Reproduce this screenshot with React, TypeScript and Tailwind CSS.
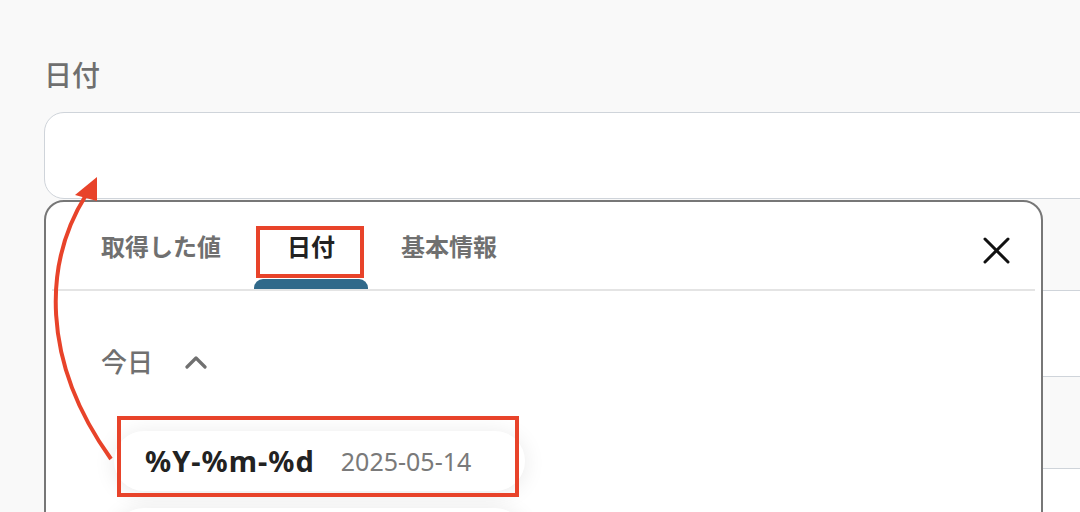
import { useState } from 'react'

type Tab = { key: string; label: string }

const tabs: Tab[] = [
  { key: 'values', label: '取得した値' },
  { key: 'date', label: '日付' },
  { key: 'basic', label: '基本情報' },
]

const formats = [{ fmt: '%Y-%m-%d', sample: '2025-05-14' }]

function Field({ label }: { label: string }) {
  return (
    <div className="flex flex-col">
      <div className="h-[53px] text-[28px] leading-[32px] font-medium text-[#6f6f6f]">{label}</div>
      <div className="h-[87px] rounded-[20px] border border-[#cfd4da] bg-white" />
    </div>
  )
}

export default function App() {
  const [active, setActive] = useState('date')
  const [open, setOpen] = useState(true)

  return (
    <div
      className="relative w-[1080px] h-[512px] overflow-hidden bg-[#f9f9f9]"
      style={{ fontFamily: '"Noto Sans", "Noto Sans CJK JP", sans-serif' }}
    >
      {/* form behind the picker */}
      <div className="w-[1300px] pl-[44px] pt-[59px] flex flex-col gap-[38px]">
        <Field label="日付" />
        <Field label="" />
        <Field label="" />
      </div>

      {open && (
        <div className="absolute left-[44px] top-[200px] w-[999px] h-[400px] rounded-[20px] border-2 border-[#777777] bg-white">
          {/* tabs */}
          <div className="flex h-[87px] pl-[22px]">
            {tabs.map((t) => (
              <button
                key={t.key}
                onClick={() => setActive(t.key)}
                className="flex flex-col items-center px-[33px]"
              >
                <span
                  className={`pt-[29px] text-[24px] leading-[32px] font-bold ${
                    active === t.key ? 'text-[#222222]' : 'text-[#707070]'
                  }`}
                >
                  {t.label}
                </span>
                <span
                  className={`mt-auto h-[10px] -mx-[33px] self-stretch rounded-t-[9px] ${
                    active === t.key ? 'bg-[#30698a]' : 'bg-transparent'
                  }`}
                />
              </button>
            ))}
            <button onClick={() => setOpen(false)} className="ml-auto mr-[31px] mt-[35px] self-start">
              <svg width="27" height="27" viewBox="0 0 27 27" fill="none" stroke="#111111" strokeWidth="3" strokeLinecap="round">
                <path d="M2 2L25 25M25 2L2 25" />
              </svg>
            </button>
          </div>
          <div className="mx-[6px] h-[2px] bg-[#e4e4e4]" />

          {/* today section */}
          <div className="flex items-center pl-[55px] pt-[53px] gap-[32px]">
            <span className="text-[26px] leading-[36px] font-medium text-[#707070]">今日</span>
            <svg width="22" height="14" viewBox="0 0 22 14" fill="none" stroke="#707070" strokeWidth="3.2" strokeLinecap="round" strokeLinejoin="round">
              <path d="M2 12L11 3L20 12" />
            </svg>
          </div>

          <div className="flex flex-col gap-[17px] pl-[68px] pt-[51px]">
            {formats.map((f) => (
              <div
                key={f.fmt}
                className="flex items-center w-[411px] h-[60px] rounded-[30px] bg-white pl-[31px] gap-[26px] shadow-[0_2px_22px_rgba(0,0,0,0.09)]"
              >
                <span className="text-[29px] leading-[36px] font-bold tracking-[1px] text-[#222222]">{f.fmt}</span>
                <span className="text-[25px] leading-[34px] text-[#7a7a7a]">{f.sample}</span>
              </div>
            ))}
            {/* next option, scrolled out of view */}
            <div className="w-[411px] h-[60px] rounded-[30px] bg-white shadow-[0_2px_22px_rgba(0,0,0,0.09)]" />
          </div>
        </div>
      )}

      {/* annotations */}
      <div className="absolute left-[256px] top-[226px] w-[108px] h-[52px] border-4 border-[#e8432a] pointer-events-none" />
      <div className="absolute left-[117px] top-[416px] w-[402px] h-[81px] border-4 border-[#e8432a] pointer-events-none" />
      <svg className="absolute inset-0 pointer-events-none" width="1080" height="512" viewBox="0 0 1080 512" fill="none">
        <path d="M111 459C40 360 44 262 86 195" stroke="#e8432a" strokeWidth="4" />
        <path d="M97 177L75 195L97 201Z" fill="#e8432a" />
      </svg>
    </div>
  )
}
